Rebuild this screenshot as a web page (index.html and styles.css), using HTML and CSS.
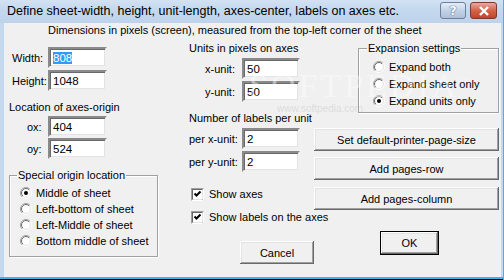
FILE: index.html
```html
<html>
<head>
<link rel="stylesheet" href="styles.css">
<title>Define sheet</title>
</head>
<body>
<svg class="defs" width="0" height="0">
  <defs>
    <linearGradient id="ringOut" x1="0" y1="0" x2="1" y2="1">
      <stop offset="0.45" stop-color="#a0a0a0"/><stop offset="0.55" stop-color="#ffffff"/>
    </linearGradient>
    <linearGradient id="ringIn" x1="0" y1="0" x2="1" y2="1">
      <stop offset="0.45" stop-color="#696969"/><stop offset="0.55" stop-color="#e3e3e3"/>
    </linearGradient>
  </defs>
</svg>

<div class="window">
  <div class="titlebar">
    <span class="title">Define sheet-width, height, unit-length, axes-center, labels on axes etc.</span>
    <span class="tbtn help">?</span>
    <span class="tbtn close">
      <svg width="12" height="10" viewBox="0 0 12 10"><path d="M2 1 L10 9 M10 1 L2 9" stroke="#fff" stroke-width="2.4"/></svg>
    </span>
  </div>

  <div class="client">
    <div class="subtitle">Dimensions in pixels (screen), measured from the top-left corner of the sheet</div>

    <div class="cols">
      <!-- left: sheet size + origin -->
      <div class="col left">
        <div class="row r-width"><label class="lbl">Width:</label><span class="edit"><span class="sel">808</span></span></div>
        <div class="row r-height"><label class="lbl">Height:</label><span class="edit">1048</span></div>
        <div class="heading h-origin">Location of axes-origin</div>
        <div class="row r-ox"><label class="lbl ind">ox:</label><span class="edit">404</span></div>
        <div class="row r-oy"><label class="lbl ind">oy:</label><span class="edit">524</span></div>

        <fieldset class="group g-origin">
          <legend>Special origin location</legend>
          <div class="opt"><svg class="radio" width="12" height="12"><circle cx="6" cy="6" r="5.5" fill="none" stroke="url(#ringOut)"/><circle cx="6" cy="6" r="4.5" fill="#fff" stroke="url(#ringIn)"/><circle cx="6" cy="6" r="2" fill="#000"/></svg>Middle of sheet</div>
          <div class="opt"><svg class="radio" width="12" height="12"><circle cx="6" cy="6" r="5.5" fill="none" stroke="url(#ringOut)"/><circle cx="6" cy="6" r="4.5" fill="#fff" stroke="url(#ringIn)"/></svg>Left-bottom of sheet</div>
          <div class="opt"><svg class="radio" width="12" height="12"><circle cx="6" cy="6" r="5.5" fill="none" stroke="url(#ringOut)"/><circle cx="6" cy="6" r="4.5" fill="#fff" stroke="url(#ringIn)"/></svg>Left-Middle of sheet</div>
          <div class="opt"><svg class="radio" width="12" height="12"><circle cx="6" cy="6" r="5.5" fill="none" stroke="url(#ringOut)"/><circle cx="6" cy="6" r="4.5" fill="#fff" stroke="url(#ringIn)"/></svg>Bottom middle of sheet</div>
        </fieldset>
      </div>

      <!-- middle: units and labels -->
      <div class="col mid">
        <div class="heading h-units">Units in pixels on axes</div>
        <div class="row r-xu"><label class="lbl2 ind2">x-unit:</label><span class="edit e-sm">50</span></div>
        <div class="row r-yu"><label class="lbl2 ind2">y-unit:</label><span class="edit e-sm">50</span></div>
        <div class="heading h-labels">Number of labels per unit</div>
        <div class="row r-px"><label class="lbl2">per x-unit:</label><span class="edit e-sm">2</span></div>
        <div class="row r-py"><label class="lbl2">per y-unit:</label><span class="edit e-sm">2</span></div>

        <div class="check c-axes"><svg class="cbox" width="13" height="13"><rect x="0.5" y="0.5" width="12" height="12" fill="#fff" stroke="#a0a0a0"/><path d="M0.5 12.5 H12.5 V0.5" fill="none" stroke="#fff"/><rect x="1.5" y="1.5" width="10" height="10" fill="#fff" stroke="#696969"/><path d="M1.5 11.5 H11.5 V1.5" fill="none" stroke="#e3e3e3"/><path d="M3.5 5.5 L5.5 7.5 L9.5 3.5" fill="none" stroke="#000" stroke-width="2"/></svg>Show axes</div>
        <div class="check c-labels"><svg class="cbox" width="13" height="13"><rect x="0.5" y="0.5" width="12" height="12" fill="#fff" stroke="#a0a0a0"/><path d="M0.5 12.5 H12.5 V0.5" fill="none" stroke="#fff"/><rect x="1.5" y="1.5" width="10" height="10" fill="#fff" stroke="#696969"/><path d="M1.5 11.5 H11.5 V1.5" fill="none" stroke="#e3e3e3"/><path d="M3.5 5.5 L5.5 7.5 L9.5 3.5" fill="none" stroke="#000" stroke-width="2"/></svg>Show labels on the axes</div>

        <button class="btn b-cancel">Cancel</button>
      </div>

      <!-- right: expansion + page buttons -->
      <div class="col right">
        <fieldset class="group g-expand">
          <legend>Expansion settings</legend>
          <div class="opt opt17"><svg class="radio" width="12" height="12"><circle cx="6" cy="6" r="5.5" fill="none" stroke="url(#ringOut)"/><circle cx="6" cy="6" r="4.5" fill="#fff" stroke="url(#ringIn)"/></svg>Expand both</div>
          <div class="opt opt17"><svg class="radio" width="12" height="12"><circle cx="6" cy="6" r="5.5" fill="none" stroke="url(#ringOut)"/><circle cx="6" cy="6" r="4.5" fill="#fff" stroke="url(#ringIn)"/></svg>Expand sheet only</div>
          <div class="opt opt17"><svg class="radio" width="12" height="12"><circle cx="6" cy="6" r="5.5" fill="none" stroke="url(#ringOut)"/><circle cx="6" cy="6" r="4.5" fill="#fff" stroke="url(#ringIn)"/><circle cx="6" cy="6" r="2" fill="#000"/></svg>Expand units only</div>
        </fieldset>

        <button class="btn wide b-print">Set default-printer-page-size</button>
        <button class="btn wide b-row">Add pages-row</button>
        <button class="btn wide b-column">Add pages-column</button>
        <button class="btn b-ok">OK</button>
      </div>
    </div>

    <div class="watermark">SOFTPEDIA<sup>™</sup><span class="wm-url">www.softpedia.com</span></div>
  </div>
  <div class="frame-bottom"></div>
</div>
</body>
</html>
```

FILE: styles.css
```css
* { box-sizing: border-box; }
body { margin: 0; font: 11px "Liberation Sans", Arial, sans-serif; color: #000; }
.defs { position: absolute; }

.window {
  width: 504px; height: 280px;
  background: #c4d8ee;
  border-right: 1px solid #5fa9d6;
  display: flex; flex-direction: column;
}

/* title bar */
.titlebar {
  height: 23px; flex: none;
  display: flex; align-items: center;
  padding: 0 6px 0 7px;
  background: linear-gradient(#d3e2f3, #c4d8ee 40%, #bed3eb);
}
.title { font: 12.5px "Liberation Sans", sans-serif; flex: 1; white-space: nowrap; margin-top: -1px; }
.tbtn {
  height: 17px; margin-top: -2px;
  display: flex; align-items: center; justify-content: center;
  border: 1px solid #6e7f99; border-radius: 3px;
}
.help {
  width: 26px; margin-right: 4px;
  background: linear-gradient(#e4edf7, #c2d3e8 50%, #aebfd8);
  color: #fff; font: bold 13px "DejaVu Sans", sans-serif;
  text-shadow: 0 0 1px #3d5278, 0 0 1px #3d5278;
}
.close {
  width: 27px;
  border-color: #7a3a2c;
  background: linear-gradient(#e9a99a, #d2644a 50%, #c3432a);
}

/* client area */
.client {
  flex: none; height: 254px;
  margin: 0 2px 0 4px;
  background: #f0f0f0;
  position: relative;
  border-left: 1px solid #e8f0f8;
}
.frame-bottom { flex: 1; border-top: 2px solid #3cb5e6; border-bottom: 1px solid #000; }

.subtitle { margin: 1px 0 0 43px; line-height: 13px; white-space: nowrap; }

.cols { display: flex; align-items: flex-start; }
.col { display: flex; flex-direction: column; align-items: flex-start; flex: none; }
.left { width: 149px; margin-left: 4px; }
.mid { width: 125px; margin-left: 31px; }
.right { width: 185px; }

.row { display: flex; align-items: center; height: 21px; }
.lbl { width: 39px; padding-left: 3px; white-space: nowrap; }
.lbl.ind { padding-left: 18px; }
.lbl2 { width: 53px; white-space: nowrap; }
.lbl2.ind2 { padding-left: 16px; }

.edit {
  width: 59px; height: 21px;
  background: #fff;
  border-style: solid; border-width: 2px;
  border-color: #8a8a8a #f0f0f0 #f0f0f0 #8a8a8a;
  box-shadow: inset 1px 1px #696969, inset -1px -1px #e3e3e3;
  padding: 2px 0 0 3px; line-height: 14px; font-size: 11.5px;
}
.e-sm { width: 58px; }
.sel { background: #3399ff; color: #fff; }

.heading { line-height: 13px; white-space: nowrap; }

.r-width { margin-top: 10px; }
.r-height { margin-top: 2px; }
.h-origin { margin-top: 10px; }
.r-ox { margin-top: 2px; }
.r-oy { margin-top: 1px; }

/* etched group boxes */
.group {
  margin: 0; min-width: 0;
  border: 1px solid #a0a0a0;
  box-shadow: inset 1px 1px #fff, 1px 1px #fff;
  padding: 4px 0 0 10px;
}
.group legend { padding: 0 1px; margin-left: -3px; line-height: 12px; white-space: nowrap; }
.g-origin { width: 149px; height: 88px; margin-top: 10px; }

.opt { display: flex; align-items: center; height: 16px; white-space: nowrap; }
.opt17 { height: 17px; }
.radio { margin-right: 4px; flex: none; }

/* middle column */
.h-units { margin-top: 5px; }
.r-xu { margin-top: 3px; }
.r-yu { margin-top: 2px; }
.h-labels { margin-top: 10px; }
.r-px { margin-top: 3px; }
.r-py { margin-top: 2px; }

.check { display: flex; align-items: center; height: 16px; padding-left: 2px; white-space: nowrap; }
.cbox { margin-right: 5px; flex: none; }
.c-axes { margin-top: 14px; }
.c-labels { margin-top: 7px; }

.btn {
  font: 11px "Liberation Sans", Arial, sans-serif;
  background: #f0f0f0; color: #000;
  border: none; padding: 0;
  height: 23px;
  box-shadow: inset -1px -1px #696969, inset 1px 1px #fff, inset -2px -2px #a0a0a0, inset 2px 2px #e3e3e3;
}
.b-cancel { width: 74px; margin: 16px 0 0 51px; }

/* right column */
.g-expand { width: 141px; height: 71px; margin-left: 44px; margin-top: 5px; padding: 4px 0 0 14px; }
.g-expand legend { margin-left: -6px; }
.wide { width: 185px; }
.b-print { margin-top: 15px; }
.b-row { margin-top: 6px; }
.b-column { margin-top: 7px; }
.b-ok {
  width: 59px; height: 24px; margin: 21px 0 0 66px;
  border: 1px solid #000;
  box-shadow: inset -1px -1px #696969, inset 1px 1px #fff, inset -2px -2px #a0a0a0, inset 2px 2px #e3e3e3;
}

/* faint site watermark over the dialog */
.watermark {
  position: absolute; left: 244px; top: 44px;
  font: 34px "Liberation Serif", serif; letter-spacing: 3px;
  color: rgba(255, 255, 255, 0.45);
  pointer-events: none; white-space: nowrap;
}
.watermark sup { font-size: 10px; }
.wm-url {
  position: absolute; left: 28px; top: 36px;
  font: 10px "Liberation Sans", sans-serif; letter-spacing: 0;
  color: rgba(170, 170, 170, 0.3);
}
```
